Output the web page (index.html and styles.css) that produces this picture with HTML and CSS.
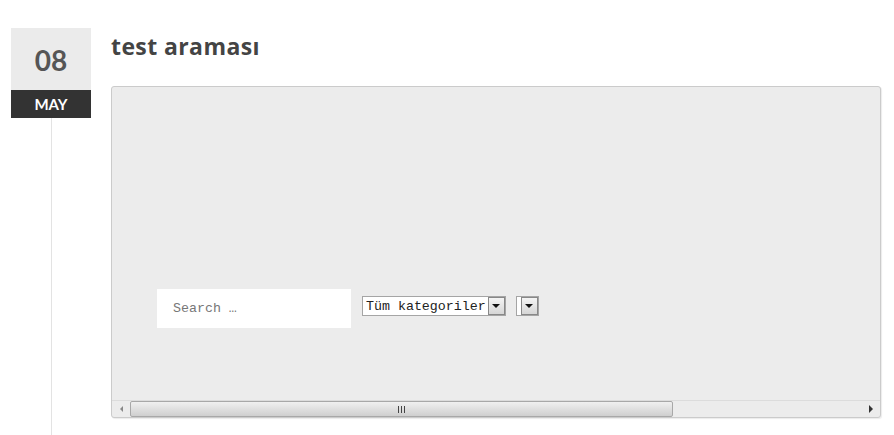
FILE: index.html
```html
<!DOCTYPE html>
<html lang="tr">
<head>
  <meta charset="UTF-8" />
  <meta name="viewport" content="width=device-width, initial-scale=1.0"/>
  <title>test araması</title>
  <link rel="stylesheet" href="styles.css">
</head>
<body>
  <div class="post">
    <div class="postDate">
      <div class="day">08</div>
      <div class="month">MAY</div>
      <div class="timeline"></div>
    </div>
    <div class="postBody">
      <h2 class="postTitle">test araması</h2>
      <div class="embedFrame">
        <div class="frameView">
          <div class="searchRow">
            <div class="searchField">Search …</div>
            <div class="fakeSelect">
              <span class="selectText">Tüm kategoriler</span>
              <span class="selectArrow"></span>
            </div>
            <div class="fakeSelect small">
              <span class="selectText"></span>
              <span class="selectArrow"></span>
            </div>
          </div>
        </div>
        <div class="hScroll">
          <span class="scrollBtn left"></span>
          <div class="scrollTrack">
            <div class="scrollThumb"><span class="grip"></span></div>
          </div>
          <span class="scrollBtn right"></span>
        </div>
      </div>
    </div>
  </div>
</body>
</html>
```

FILE: styles.css
```css
body {
  margin: 0;
  font-family: Lato, "Open Sans", sans-serif;
  background-color: white;
}

.post {
  display: flex;
  padding: 28px 0 0 11px;
  height: 407px;
}

/* date badge with the line under it */
.postDate {
  width: 80px;
  display: flex;
  flex-direction: column;
  align-items: center;
}
.day {
  width: 80px;
  height: 62px;
  background-color: #ebebeb;
  color: #555;
  font-size: 28px;
  font-weight: 700;
  display: flex;
  align-items: center;
  justify-content: center;
  padding-top: 1px;
  box-sizing: border-box;
}
.month {
  width: 80px;
  height: 28px;
  background-color: #333;
  color: white;
  font-size: 15px;
  font-weight: 700;
  display: flex;
  align-items: center;
  justify-content: center;
}
.timeline {
  flex: 1;
  width: 1px;
  background-color: #e3e3e3;
}

.postBody {
  margin-left: 20px;
  width: 770px;
}
.postTitle {
  margin: 3px 0 0;
  font-family: "Open Sans", Lato, sans-serif;
  font-size: 23px;
  font-weight: 700;
  color: #444;
  letter-spacing: 0.4px;
  line-height: 30px;
}

/* embedded page */
.embedFrame {
  margin-top: 25px;
  height: 330px;
  border: 1px solid #cbcbcb;
  border-radius: 3px;
  background-color: #ececec;
  display: flex;
  flex-direction: column;
  box-shadow: 1px 1px 1px rgba(0, 0, 0, 0.08);
}
.frameView {
  flex: 1;
  display: flex;
  align-items: flex-end;
}
.searchRow {
  display: flex;
  align-items: flex-start;
  margin: 0 0 72px 45px;
  font-family: "Liberation Mono", monospace;
  font-size: 13.3px;
}
.searchField {
  width: 194px;
  height: 39px;
  background-color: white;
  color: #777;
  padding-left: 16px;
  box-sizing: border-box;
  display: flex;
  align-items: center;
}
.fakeSelect {
  margin: 7px 0 0 11px;
  height: 20px;
  border: 1px solid #a5a5a5;
  background-color: white;
  display: flex;
  box-sizing: border-box;
}
.fakeSelect.small {
  margin-left: 10px;
}
.selectText {
  padding: 0 2px 0 3px;
  line-height: 19px;
  color: #222;
}
.fakeSelect.small .selectText {
  padding: 0 4px 0 0;
}
.selectArrow {
  width: 17px;
  height: 18px;
  box-sizing: border-box;
  border: 1px solid #888;
  background: linear-gradient(#f4f4f4, #d6d6d6);
  display: flex;
  align-items: center;
  justify-content: center;
}
.selectArrow::after {
  content: "";
  border-left: 4px solid transparent;
  border-right: 4px solid transparent;
  border-top: 4px solid #111;
}

/* horizontal scrollbar */
.hScroll {
  height: 16px;
  display: flex;
  align-items: center;
  border-top: 1px solid #dcdcdc;
}
.scrollBtn {
  width: 18px;
  height: 16px;
  display: flex;
  align-items: center;
  justify-content: center;
}
.scrollBtn.left::after {
  content: "";
  border-top: 3px solid transparent;
  border-bottom: 3px solid transparent;
  border-right: 3px solid #888;
}
.scrollBtn.right {
  margin-left: auto;
}
.scrollBtn.right::after {
  content: "";
  border-top: 4px solid transparent;
  border-bottom: 4px solid transparent;
  border-left: 4px solid #333;
}
.scrollTrack {
  flex: 1;
  height: 16px;
}
.scrollThumb {
  width: 543px;
  height: 16px;
  box-sizing: border-box;
  border: 1px solid #a8a8a8;
  border-radius: 2px;
  background: linear-gradient(#f0f0f0, #cfcfcf);
  display: flex;
  align-items: center;
  justify-content: center;
}
.grip {
  width: 7px;
  height: 7px;
  background: repeating-linear-gradient(90deg, #444 0 1px, transparent 1px 3px);
}
```
